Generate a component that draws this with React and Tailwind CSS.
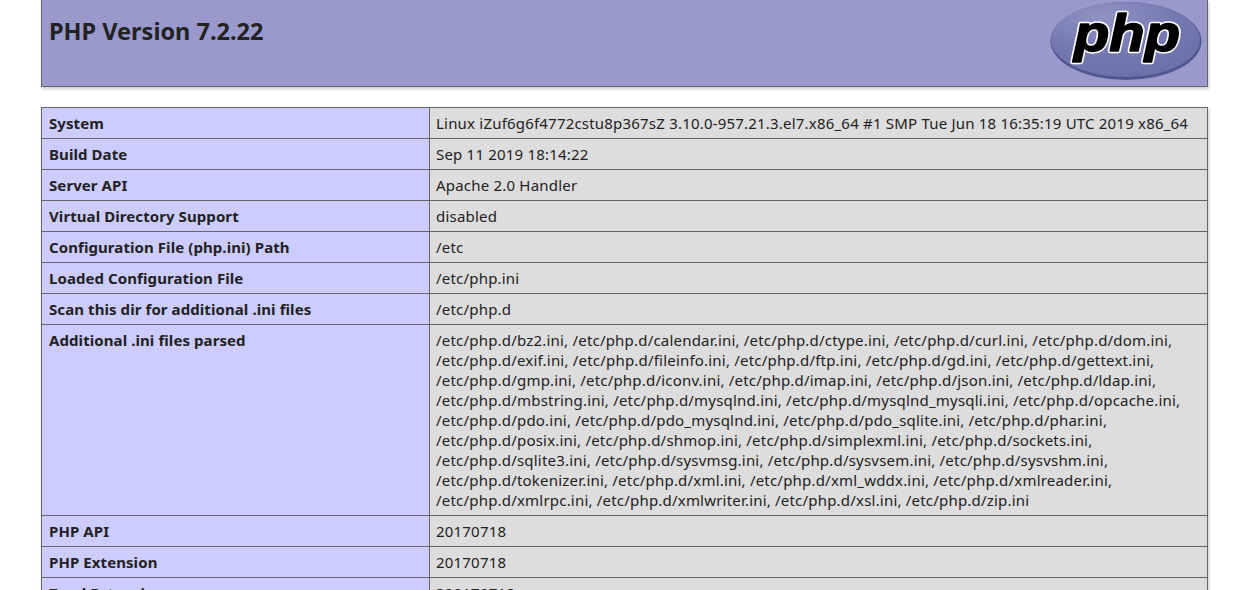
const rows = [
  ['System', 'Linux iZuf6g6f4772cstu8p367sZ 3.10.0-957.21.3.el7.x86_64 #1 SMP Tue Jun 18 16:35:19 UTC 2019 x86_64'],
  ['Build Date', 'Sep 11 2019 18:14:22'],
  ['Server API', 'Apache 2.0 Handler'],
  ['Virtual Directory Support', 'disabled'],
  ['Configuration File (php.ini) Path', '/etc'],
  ['Loaded Configuration File', '/etc/php.ini'],
  ['Scan this dir for additional .ini files', '/etc/php.d'],
  [
    'Additional .ini files parsed',
    [
      '/etc/php.d/bz2.ini, /etc/php.d/calendar.ini, /etc/php.d/ctype.ini, /etc/php.d/curl.ini, /etc/php.d/dom.ini,',
      '/etc/php.d/exif.ini, /etc/php.d/fileinfo.ini, /etc/php.d/ftp.ini, /etc/php.d/gd.ini, /etc/php.d/gettext.ini,',
      '/etc/php.d/gmp.ini, /etc/php.d/iconv.ini, /etc/php.d/imap.ini, /etc/php.d/json.ini, /etc/php.d/ldap.ini,',
      '/etc/php.d/mbstring.ini, /etc/php.d/mysqlnd.ini, /etc/php.d/mysqlnd_mysqli.ini, /etc/php.d/opcache.ini,',
      '/etc/php.d/pdo.ini, /etc/php.d/pdo_mysqlnd.ini, /etc/php.d/pdo_sqlite.ini, /etc/php.d/phar.ini,',
      '/etc/php.d/posix.ini, /etc/php.d/shmop.ini, /etc/php.d/simplexml.ini, /etc/php.d/sockets.ini,',
      '/etc/php.d/sqlite3.ini, /etc/php.d/sysvmsg.ini, /etc/php.d/sysvsem.ini, /etc/php.d/sysvshm.ini,',
      '/etc/php.d/tokenizer.ini, /etc/php.d/xml.ini, /etc/php.d/xml_wddx.ini, /etc/php.d/xmlreader.ini,',
      '/etc/php.d/xmlrpc.ini, /etc/php.d/xmlwriter.ini, /etc/php.d/xsl.ini, /etc/php.d/zip.ini',
    ],
  ],
  ['PHP API', '20170718'],
  ['PHP Extension', '20170718'],
  ['Zend Extension', '320170718'],
];

const PhpLogo = () => (
  <svg width="156" height="82" viewBox="0 0 156 82" className="block">
    <defs>
      <radialGradient id="php-oval" cx="0.35" cy="0.2" r="0.9">
        <stop offset="0" stopColor="#8f93c4" />
        <stop offset="0.55" stopColor="#7378b0" />
        <stop offset="1" stopColor="#6a6fa8" />
      </radialGradient>
      <text
        id="php-word"
        x="26"
        y="51"
        textLength="106"
        lengthAdjust="spacingAndGlyphs"
        fontFamily="'Liberation Sans', sans-serif"
        fontSize="52"
        fontWeight="700"
        fontStyle="italic"
      >
        php
      </text>
    </defs>
    <ellipse cx="78" cy="41" rx="75.5" ry="39" fill="#50568f" />
    <ellipse cx="77.5" cy="39.5" rx="74.5" ry="37.5" fill="url(#php-oval)" />
    <use href="#php-word" fill="#fff" stroke="#fff" strokeWidth="4.5" strokeLinejoin="round" />
    <use href="#php-word" fill="#000" stroke="#000" strokeWidth="1.6" strokeLinejoin="round" />
  </svg>
);

export default function App() {
  return (
    <div className="h-[590px] overflow-hidden bg-white pl-[41px] font-['Noto_Sans',sans-serif] text-[15px] leading-[20px] text-[#222]">
      <div className="w-[1167px]">
        <header className="flex h-[87px] justify-between border border-t-0 border-[#666] bg-[#9999cc] pr-[3px] shadow-[1px_2px_3px_#ccc]">
          <h1 className="pl-[7px] pt-[15px] text-[23.5px] font-bold leading-[32px]">PHP Version 7.2.22</h1>
          <PhpLogo />
        </header>
        <table className="mt-[20px] w-full table-fixed border-collapse shadow-[1px_2px_3px_#ccc]">
          <colgroup>
            <col className="w-[388px]" />
            <col />
          </colgroup>
          <tbody>
            {rows.map(([label, value]) => (
              <tr key={label}>
                <td className="border border-[#666] bg-[#ccccff] px-[7px] py-[5px] align-top font-bold tracking-[0.08px]">{label}</td>
                <td className="whitespace-nowrap border border-[#666] bg-[#dddddd] py-[5px] pl-[6px] pr-[7px] align-top tracking-[0.2px]">
                  {Array.isArray(value) ? value.map((line) => <div key={line}>{line}</div>) : value}
                </td>
              </tr>
            ))}
          </tbody>
        </table>
      </div>
    </div>
  );
}
